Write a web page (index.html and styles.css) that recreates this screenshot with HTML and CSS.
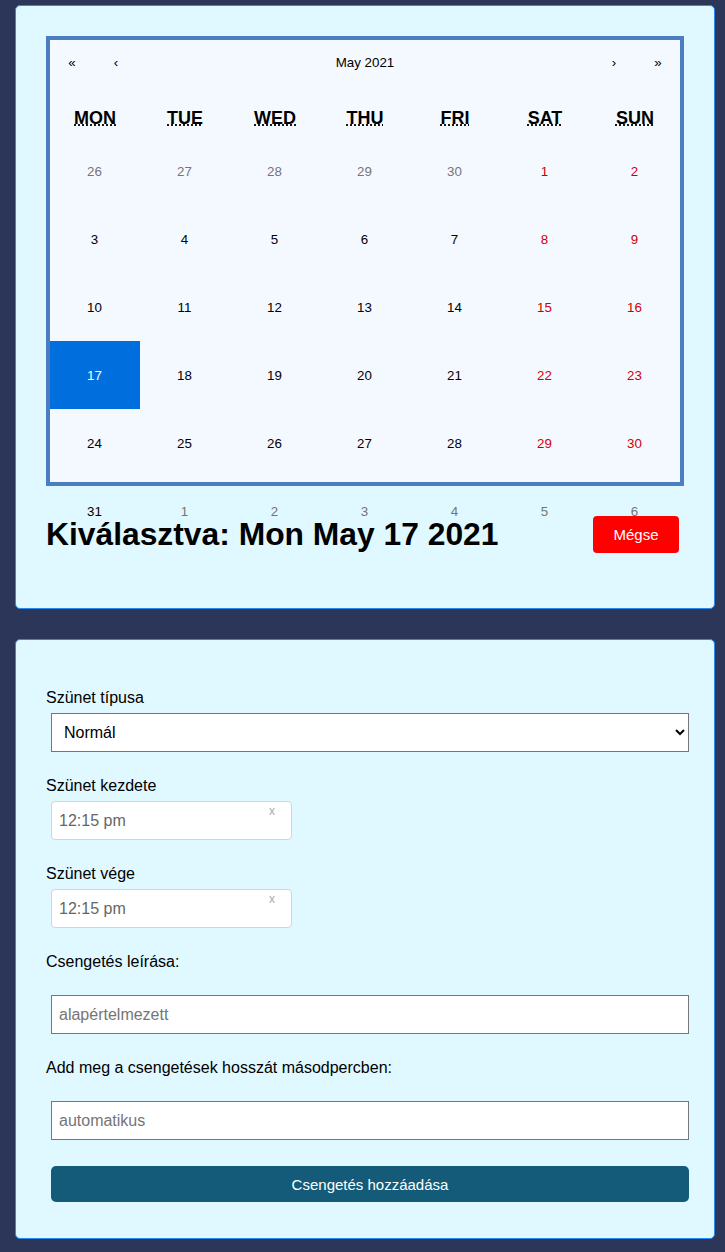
FILE: index.html
```html
<!DOCTYPE html>
<html lang="hu">
<head>
<meta charset="utf-8">
<title>Szünet</title>
<link rel="stylesheet" href="styles.css">
</head>
<body>
<div class="page">
  <section class="card card-calendar">
    <div class="calendar">
      <div class="cal-nav">
        <button class="nav-btn">«</button>
        <button class="nav-btn">‹</button>
        <span class="nav-label">May 2021</span>
        <button class="nav-btn">›</button>
        <button class="nav-btn">»</button>
      </div>
      <div class="weekdays">
        <div class="weekday"><abbr title="Monday">Mon</abbr></div>
        <div class="weekday"><abbr title="Tuesday">Tue</abbr></div>
        <div class="weekday"><abbr title="Wednesday">Wed</abbr></div>
        <div class="weekday"><abbr title="Thursday">Thu</abbr></div>
        <div class="weekday"><abbr title="Friday">Fri</abbr></div>
        <div class="weekday"><abbr title="Saturday">Sat</abbr></div>
        <div class="weekday"><abbr title="Sunday">Sun</abbr></div>
      </div>
      <div class="days">
        <button class="tile neighbor">26</button>
        <button class="tile neighbor">27</button>
        <button class="tile neighbor">28</button>
        <button class="tile neighbor">29</button>
        <button class="tile neighbor">30</button>
        <button class="tile weekend">1</button>
        <button class="tile weekend">2</button>

        <button class="tile">3</button>
        <button class="tile">4</button>
        <button class="tile">5</button>
        <button class="tile">6</button>
        <button class="tile">7</button>
        <button class="tile weekend">8</button>
        <button class="tile weekend">9</button>

        <button class="tile">10</button>
        <button class="tile">11</button>
        <button class="tile">12</button>
        <button class="tile">13</button>
        <button class="tile">14</button>
        <button class="tile weekend">15</button>
        <button class="tile weekend">16</button>

        <button class="tile active">17</button>
        <button class="tile">18</button>
        <button class="tile">19</button>
        <button class="tile">20</button>
        <button class="tile">21</button>
        <button class="tile weekend">22</button>
        <button class="tile weekend">23</button>

        <button class="tile">24</button>
        <button class="tile">25</button>
        <button class="tile">26</button>
        <button class="tile">27</button>
        <button class="tile">28</button>
        <button class="tile weekend">29</button>
        <button class="tile weekend">30</button>

        <button class="tile">31</button>
        <button class="tile neighbor">1</button>
        <button class="tile neighbor">2</button>
        <button class="tile neighbor">3</button>
        <button class="tile neighbor">4</button>
        <button class="tile neighbor">5</button>
        <button class="tile neighbor">6</button>
      </div>
    </div>
    <div class="selected-row">
      <h1 class="selected-title">Kiválasztva: Mon May 17 2021</h1>
      <button class="btn-cancel">Mégse</button>
    </div>
  </section>

  <section class="card card-form">
    <form class="form">
      <label class="label">Szünet típusa</label>
      <select class="select">
        <option>Normál</option>
      </select>

      <label class="label gap">Szünet kezdete</label>
      <div class="time-wrap">
        <input class="time-input" type="text" value="12:15 pm">
        <span class="time-clear">x</span>
      </div>

      <label class="label gap">Szünet vége</label>
      <div class="time-wrap">
        <input class="time-input" type="text" value="12:15 pm">
        <span class="time-clear">x</span>
      </div>

      <label class="label gap">Csengetés leírása:</label>
      <input class="text-input" type="text" placeholder="alapértelmezett">

      <label class="label gap">Add meg a csengetések hosszát másodpercben:</label>
      <input class="text-input" type="text" placeholder="automatikus">

      <button type="button" class="btn-submit">Csengetés hozzáadása</button>
    </form>
  </section>
</div>
</body>
</html>
```

FILE: styles.css
```css
* {
  box-sizing: border-box;
}

html, body {
  margin: 0;
  padding: 0;
  background: #2b3658;
}

body {
  font-family: "Liberation Sans", Arial, sans-serif;
  color: #000;
}

.page {
  padding: 5px 10px 14px 15px;
  display: flex;
  flex-direction: column;
  gap: 30px;
}

.card {
  background: #e0f8ff;
  border: 1px solid #2a8af0;
  border-radius: 5px;
  padding: 30px;
}

/* Calendar */
.calendar {
  width: 638px;
  height: 450px;
  border: 4px solid #4a7ec0;
  background: #f4f9ff;
}

.cal-nav {
  display: flex;
  height: 44px;
  margin-bottom: 16px;
}

.nav-btn {
  min-width: 44px;
  background: none;
  border: 0;
  padding: 0;
  margin: 0;
  font-family: inherit;
  font-size: 13.33px;
  color: #000;
}

.nav-label {
  flex: 1;
  display: flex;
  align-items: center;
  justify-content: center;
  font-size: 13.33px;
}

.weekdays {
  display: grid;
  grid-template-columns: repeat(7, 90px);
  height: 37px;
}

.weekday {
  display: flex;
  align-items: center;
  justify-content: center;
  font-size: 18px;
  font-weight: bold;
  text-transform: uppercase;
}

.weekday abbr {
  text-decoration: underline dotted;
}

.days {
  display: grid;
  grid-template-columns: repeat(7, 90px);
  grid-auto-rows: 68px;
}

.tile {
  background: none;
  border: 0;
  margin: 0;
  padding: 0 1px 0 0;
  font-family: inherit;
  font-size: 13.33px;
  color: #000;
}

.tile.weekend {
  color: #d10000;
}

.tile.neighbor {
  color: #757575;
}

.tile.active {
  background: #006edc;
  color: #fff;
}

.selected-row {
  display: flex;
  align-items: center;
  justify-content: space-between;
  margin-top: 30px;
  margin-bottom: 25px;
}

.selected-title {
  margin: 0;
  font-size: 31.8px;
  font-weight: bold;
  line-height: 37px;
}

.btn-cancel {
  background: #ff0000;
  color: #fff;
  border: 0;
  border-radius: 4px;
  width: 86px;
  height: 37px;
  margin-right: 5px;
  font-family: inherit;
  font-size: 15px;
}

/* Form */
.card-form {
  padding-top: 49px;
  padding-bottom: 36px;
}

.form {
  display: flex;
  flex-direction: column;
  align-items: flex-start;
}

.label {
  font-size: 16px;
  line-height: 18px;
}

.label.gap {
  margin-top: 25px;
}

.select {
  margin: 6px 0 0 5px;
  width: 100%;
  height: 39px;
  border: 1px solid #767676;
  border-radius: 0;
  background: #fff;
  padding: 0 8px;
  font-family: inherit;
  font-size: 16px;
  color: #000;
}

.time-wrap {
  position: relative;
  margin: 6px 0 0 5px;
  width: 241px;
}

.time-input {
  width: 100%;
  height: 39px;
  border: 1px solid #d4d4d4;
  border-radius: 4px;
  background: #fff;
  padding: 0 7px;
  font-family: inherit;
  font-size: 16px;
  color: #666;
}

.time-clear {
  position: absolute;
  top: 3px;
  right: 17px;
  font-size: 12px;
  color: #aaa;
}

.text-input {
  margin: 24px 0 0 5px;
  width: 100%;
  height: 39px;
  border: 1px solid #767676;
  border-radius: 0;
  background: #fff;
  padding: 0 7px;
  font-family: inherit;
  font-size: 16px;
  color: #000;
}

.text-input::placeholder {
  color: #757575;
}

.btn-submit {
  margin: 26px 0 0 5px;
  width: 100%;
  height: 36px;
  border: 0;
  border-radius: 5px;
  background: #135b79;
  color: #fff;
  font-family: inherit;
  font-size: 15px;
}
```
